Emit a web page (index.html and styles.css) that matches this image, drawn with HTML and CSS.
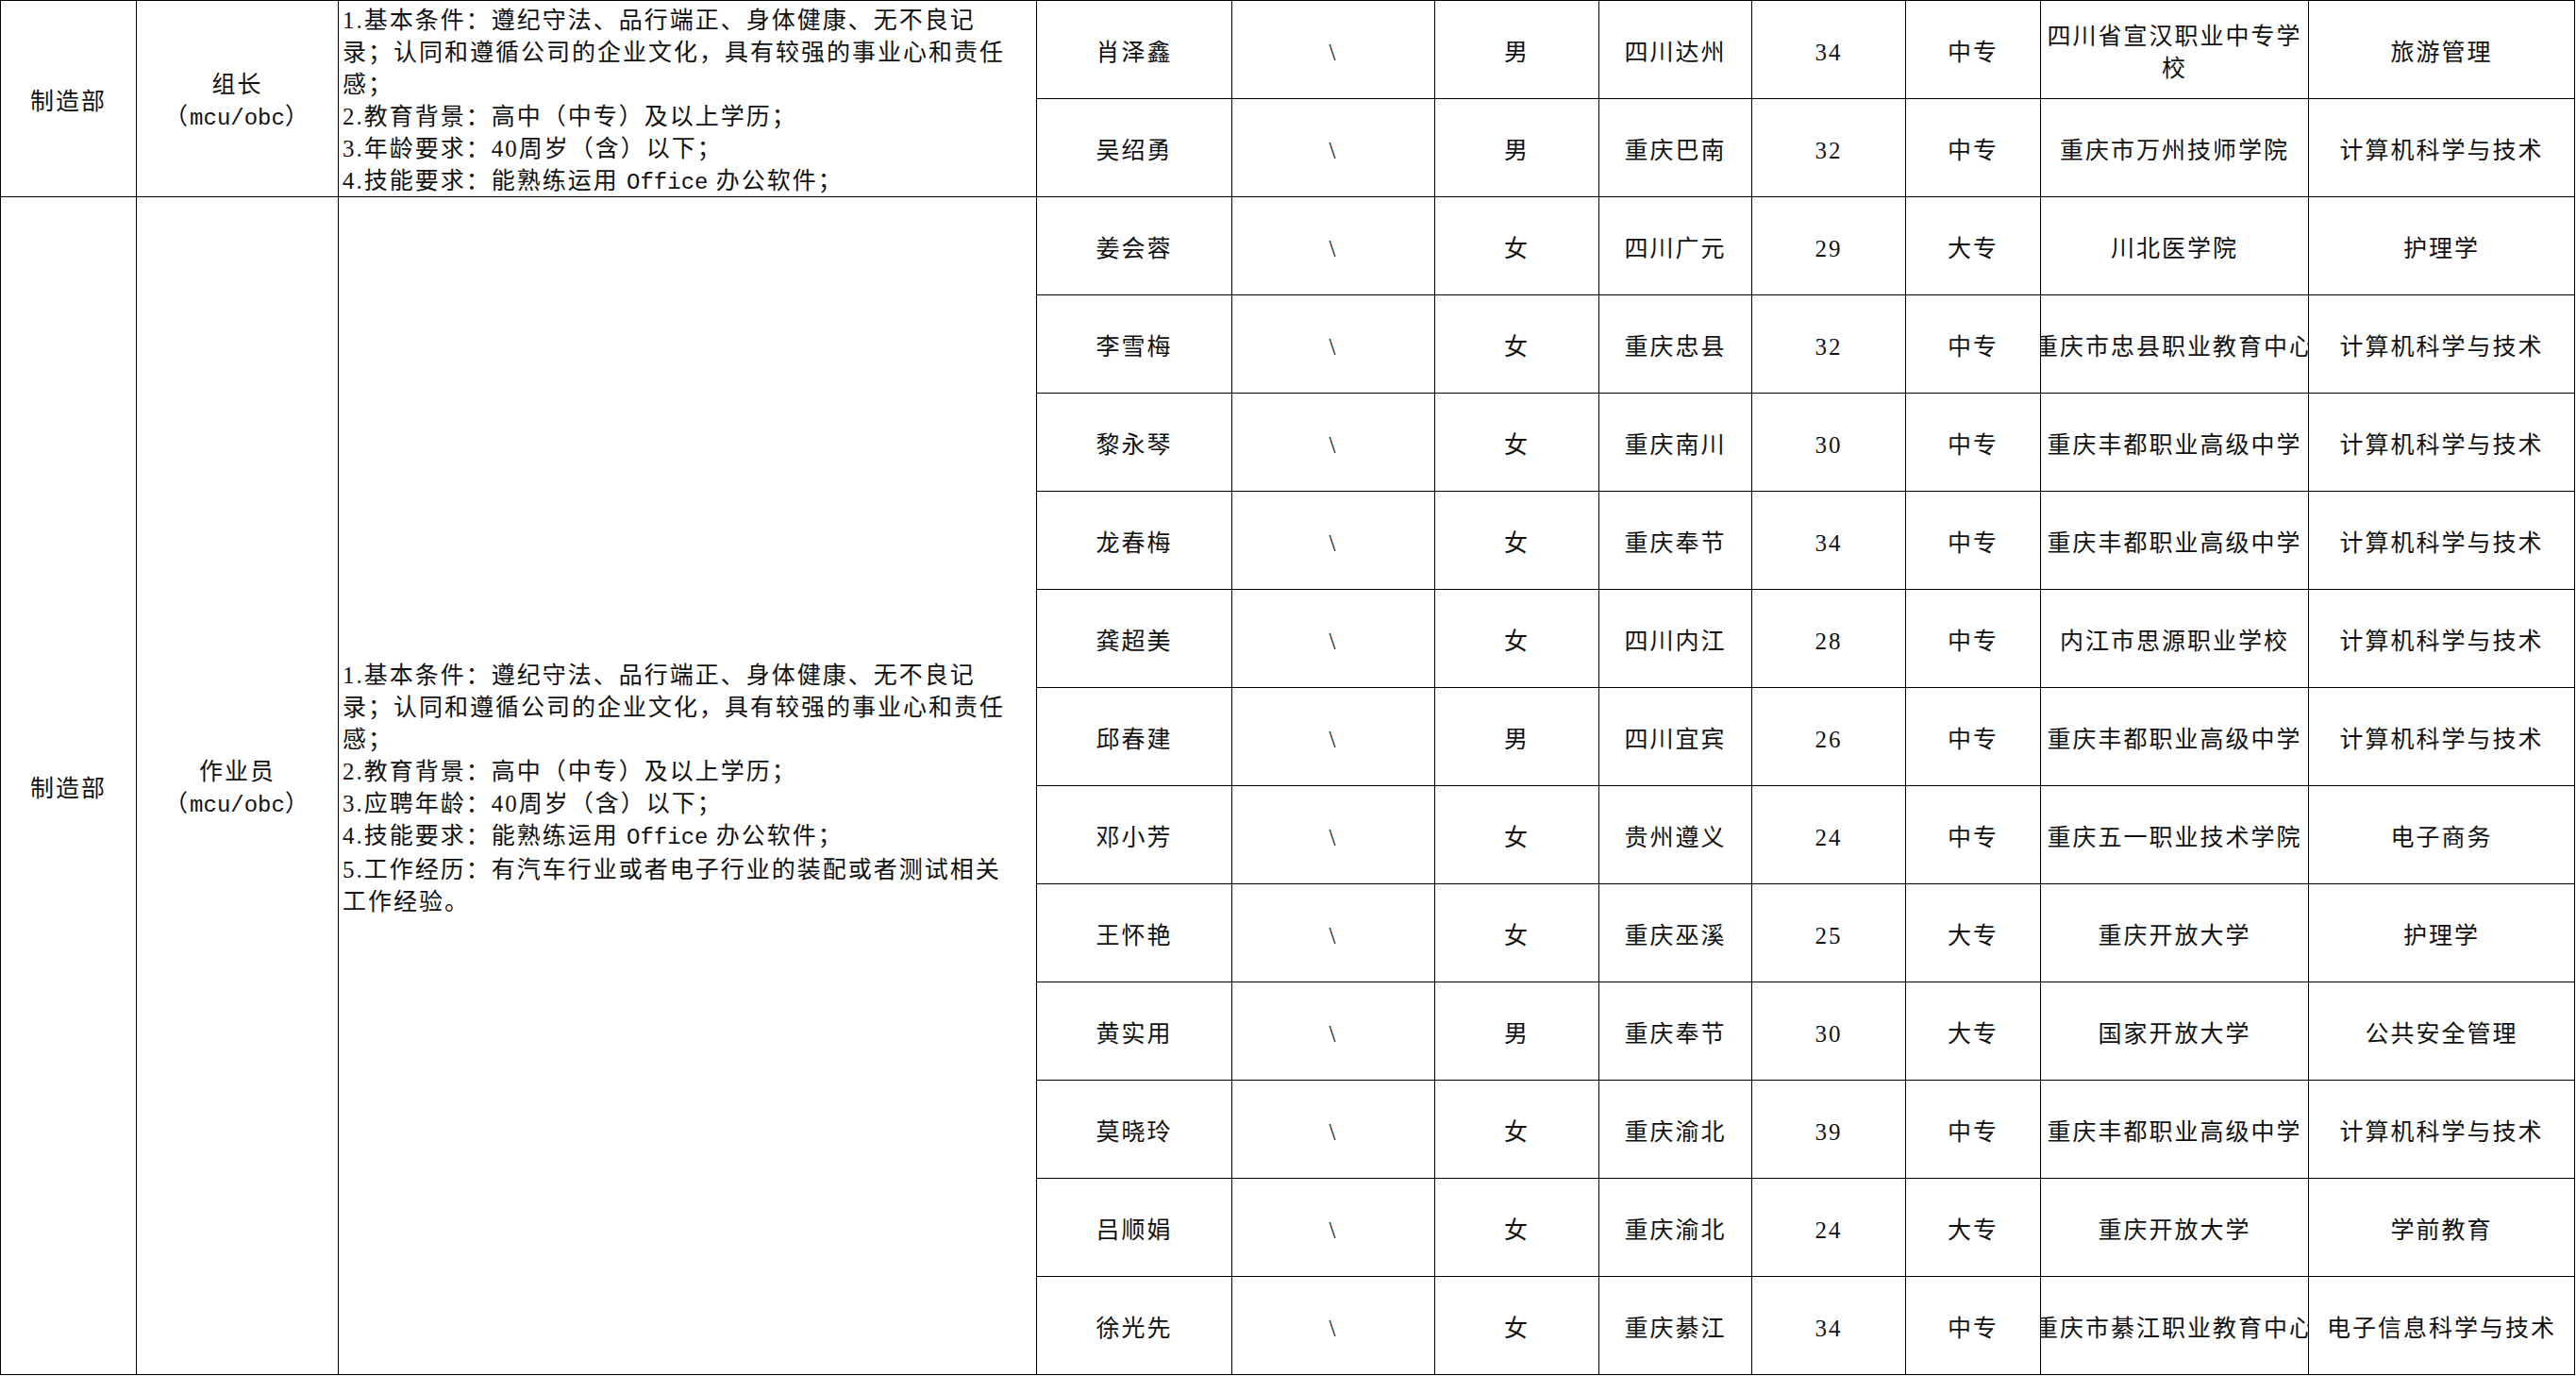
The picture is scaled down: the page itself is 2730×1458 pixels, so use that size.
FILE: index.html
```html
<!DOCTYPE html>
<html lang="zh-CN">
<head>
<meta charset="utf-8">
<title>制造部人员表</title>
<link rel="stylesheet" href="styles.css">
</head>
<body>
<div class="sheet">
  <div class="cell span2">制造部</div>
  <div class="cell span2"><div class="in">组长<br>（<span class="lat">mcu/obc</span>）</div></div>
  <div class="cell span2 desc"><div class="in">1.基本条件：遵纪守法、品行端正、身体健康、无不良记<br>录；认同和遵循公司的企业文化，具有较强的事业心和责任<br>感；<br>2.教育背景：高中（中专）及以上学历；<br>3.年龄要求：40周岁（含）以下；<br>4.技能要求：能熟练运用 <span class="lat">Office</span> 办公软件；</div></div>
  <div class="cell">肖泽鑫</div><div class="cell">\</div><div class="cell">男</div><div class="cell">四川达州</div><div class="cell">34</div><div class="cell">中专</div><div class="cell"><div class="in">四川省宣汉职业中专学<br>校</div></div><div class="cell">旅游管理</div>

  <div class="cell">吴绍勇</div><div class="cell">\</div><div class="cell">男</div><div class="cell">重庆巴南</div><div class="cell">32</div><div class="cell">中专</div><div class="cell">重庆市万州技师学院</div><div class="cell">计算机科学与技术</div>

  <div class="cell span12">制造部</div>
  <div class="cell span12"><div class="in">作业员<br>（<span class="lat">mcu/obc</span>）</div></div>
  <div class="cell span12 desc"><div class="in">1.基本条件：遵纪守法、品行端正、身体健康、无不良记<br>录；认同和遵循公司的企业文化，具有较强的事业心和责任<br>感；<br>2.教育背景：高中（中专）及以上学历；<br>3.应聘年龄：40周岁（含）以下；<br>4.技能要求：能熟练运用 <span class="lat">Office</span> 办公软件；<br>5.工作经历：有汽车行业或者电子行业的装配或者测试相关<br>工作经验。</div></div>
  <div class="cell">姜会蓉</div><div class="cell">\</div><div class="cell">女</div><div class="cell">四川广元</div><div class="cell">29</div><div class="cell">大专</div><div class="cell">川北医学院</div><div class="cell">护理学</div>

  <div class="cell">李雪梅</div><div class="cell">\</div><div class="cell">女</div><div class="cell">重庆忠县</div><div class="cell">32</div><div class="cell">中专</div><div class="cell">重庆市忠县职业教育中心</div><div class="cell">计算机科学与技术</div>

  <div class="cell">黎永琴</div><div class="cell">\</div><div class="cell">女</div><div class="cell">重庆南川</div><div class="cell">30</div><div class="cell">中专</div><div class="cell">重庆丰都职业高级中学</div><div class="cell">计算机科学与技术</div>

  <div class="cell">龙春梅</div><div class="cell">\</div><div class="cell">女</div><div class="cell">重庆奉节</div><div class="cell">34</div><div class="cell">中专</div><div class="cell">重庆丰都职业高级中学</div><div class="cell">计算机科学与技术</div>

  <div class="cell">龚超美</div><div class="cell">\</div><div class="cell">女</div><div class="cell">四川内江</div><div class="cell">28</div><div class="cell">中专</div><div class="cell">内江市思源职业学校</div><div class="cell">计算机科学与技术</div>

  <div class="cell">邱春建</div><div class="cell">\</div><div class="cell">男</div><div class="cell">四川宜宾</div><div class="cell">26</div><div class="cell">中专</div><div class="cell">重庆丰都职业高级中学</div><div class="cell">计算机科学与技术</div>

  <div class="cell">邓小芳</div><div class="cell">\</div><div class="cell">女</div><div class="cell">贵州遵义</div><div class="cell">24</div><div class="cell">中专</div><div class="cell">重庆五一职业技术学院</div><div class="cell">电子商务</div>

  <div class="cell">王怀艳</div><div class="cell">\</div><div class="cell">女</div><div class="cell">重庆巫溪</div><div class="cell">25</div><div class="cell">大专</div><div class="cell">重庆开放大学</div><div class="cell">护理学</div>

  <div class="cell">黄实用</div><div class="cell">\</div><div class="cell">男</div><div class="cell">重庆奉节</div><div class="cell">30</div><div class="cell">大专</div><div class="cell">国家开放大学</div><div class="cell">公共安全管理</div>

  <div class="cell">莫晓玲</div><div class="cell">\</div><div class="cell">女</div><div class="cell">重庆渝北</div><div class="cell">39</div><div class="cell">中专</div><div class="cell">重庆丰都职业高级中学</div><div class="cell">计算机科学与技术</div>

  <div class="cell">吕顺娟</div><div class="cell">\</div><div class="cell">女</div><div class="cell">重庆渝北</div><div class="cell">24</div><div class="cell">大专</div><div class="cell">重庆开放大学</div><div class="cell">学前教育</div>

  <div class="cell">徐光先</div><div class="cell">\</div><div class="cell">女</div><div class="cell">重庆綦江</div><div class="cell">34</div><div class="cell">中专</div><div class="cell">重庆市綦江职业教育中心</div><div class="cell">电子信息科学与技术</div>
</div>
</body>
</html>
```

FILE: styles.css
```css
html, body {
  margin: 0;
  padding: 0;
  background: #ffffff;
}

.sheet {
  display: grid;
  grid-template-columns: 144px 214px 740px 207px 215px 174px 162px 163px 143px 284px 282px;
  grid-auto-rows: 104px;
  width: max-content;
  border-top: 1px solid #000;
  border-left: 1px solid #000;
  font-family: "Liberation Serif", "Noto Sans CJK SC", sans-serif;
  font-size: 25px;
  letter-spacing: 2px;
  line-height: 34px;
  color: #111;
}

.cell {
  box-sizing: border-box;
  border-right: 1px solid #000;
  border-bottom: 1px solid #000;
  display: flex;
  align-items: center;
  justify-content: center;
  text-align: center;
  white-space: nowrap;
  overflow: hidden;
  padding-top: 6px;
}

.span2 {
  grid-row: span 2;
}

.span12 {
  grid-row: span 12;
}

.desc {
  justify-content: flex-start;
  text-align: left;
  padding-left: 4px;
}

.lat {
  font-family: "Liberation Mono", monospace;
  font-size: 24px;
  letter-spacing: 0;
}
```
